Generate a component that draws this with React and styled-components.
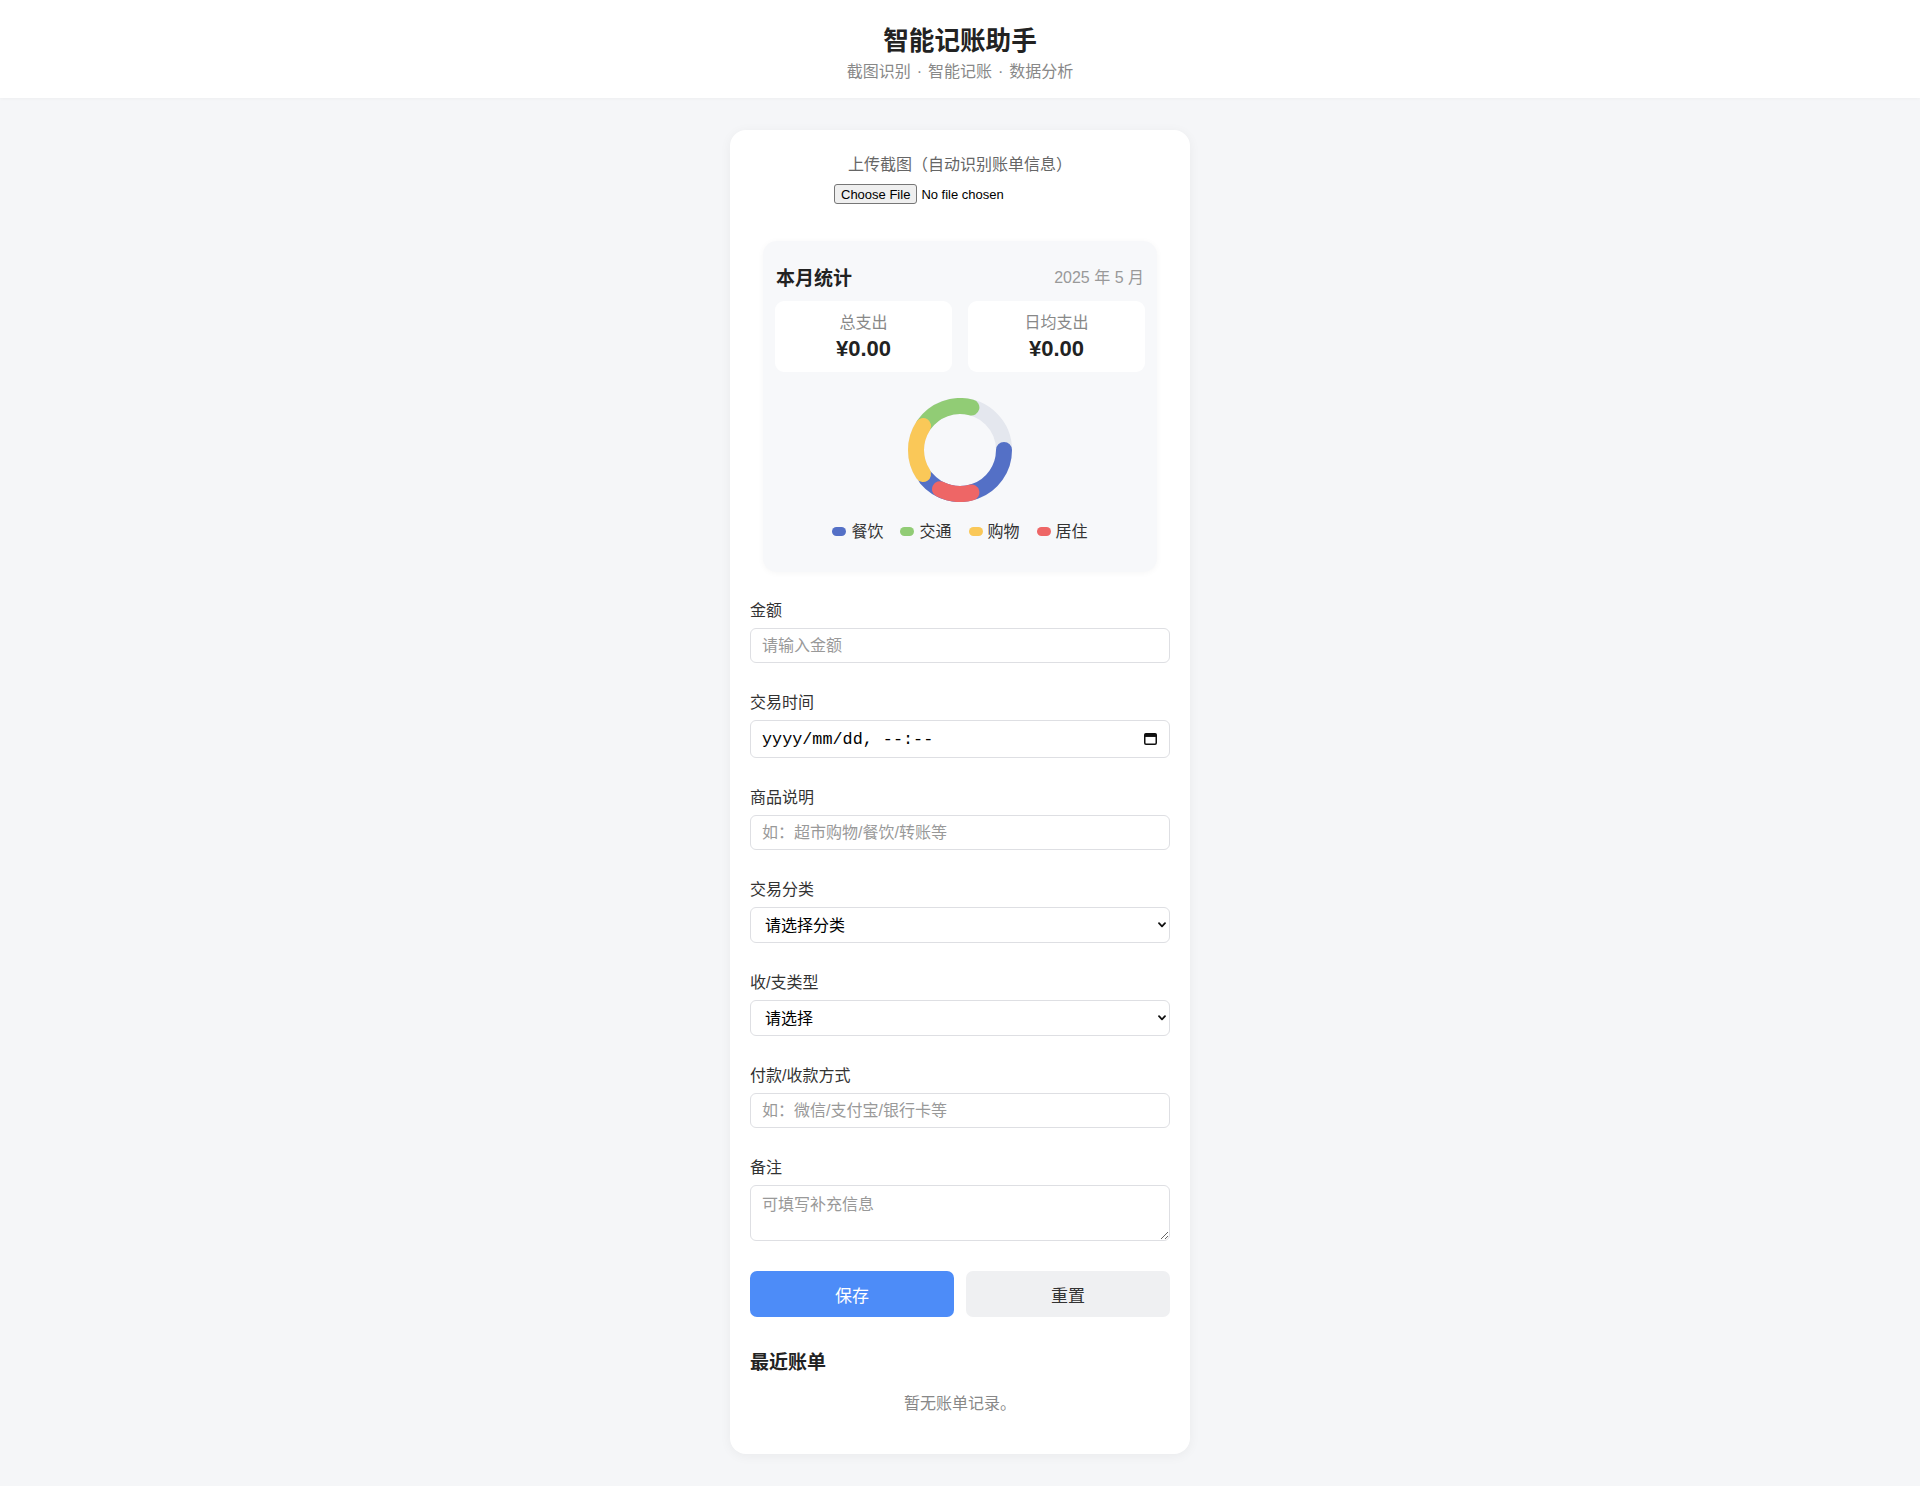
import React from 'react';
import styled, { createGlobalStyle } from 'styled-components';

const GlobalStyle = createGlobalStyle`
  body {
    margin: 0;
    background: #f5f6f8;
    font-family: "Liberation Sans", "Noto Sans CJK SC", sans-serif;
    color: #333;
  }
  * { box-sizing: border-box; }
`;

const Header = styled.header`
  background: #fff;
  padding: 24px 0 16px;
  text-align: center;
  box-shadow: 0 1px 3px rgba(0, 0, 0, 0.03);
`;

const Title = styled.h1`
  margin: 0;
  font-size: 25.6px;
  line-height: 34px;
  font-weight: 700;
  color: #222;
`;

const Subtitle = styled.div`
  margin-top: 3px;
  font-size: 16px;
  line-height: 21px;
  color: #888;
`;

const Sep = styled.span`
  margin: 0 6px;
`;

const Main = styled.main`
  padding: 32px 0 33px;
`;

const Card = styled.div`
  width: 460px;
  margin: 0 auto;
  background: #fff;
  border-radius: 16px;
  box-shadow: 0 2px 12px rgba(0, 0, 0, 0.05);
  padding: 24px 20px 40px;
`;

const Upload = styled.div`
  display: flex;
  flex-direction: column;
  align-items: center;
  margin-bottom: 37px;
`;

const UploadLabel = styled.div`
  font-size: 16px;
  line-height: 22px;
  color: #666;
  margin-bottom: 8px;
`;

const FileInput = styled.input`
  width: 252px;
  height: 20px;
  font: 13px "Liberation Sans", Arial, sans-serif;
  color: #000;

  &::file-selector-button {
    font: inherit;
    height: 20px;
    padding: 0 6px;
    margin-right: 4px;
    border: 1px solid #767676;
    border-radius: 3px;
    background: #efefef;
    color: #000;
  }
`;

const Stats = styled.section`
  margin: 0 13px 29px;
  background: #f7f8fa;
  border-radius: 14px;
  box-shadow: 0 1px 6px rgba(0, 0, 0, 0.04);
  padding: 22px 12px 30px;
`;

const StatsHead = styled.div`
  display: flex;
  justify-content: space-between;
  align-items: center;
  padding: 0 1px;
  margin-bottom: 12px;
  height: 26px;
`;

const StatsTitle = styled.h3`
  margin: 0;
  font-size: 19px;
  font-weight: 700;
  color: #222;
`;

const StatsMonth = styled.span`
  font-size: 16px;
  color: #999;
`;

const StatGrid = styled.div`
  display: grid;
  grid-template-columns: 1fr 1fr;
  gap: 16px;
`;

const StatCard = styled.div`
  background: #fff;
  border-radius: 9px;
  height: 71px;
  padding: 11px 0 0;
  display: flex;
  flex-direction: column;
  align-items: center;
`;

const StatLabel = styled.div`
  font-size: 16px;
  line-height: 22px;
  color: #888;
`;

const StatValue = styled.div`
  font-size: 22px;
  line-height: 29px;
  font-weight: 700;
  color: #222;
`;

const ChartWrap = styled.div`
  display: flex;
  justify-content: center;
  margin-top: 26px;
`;

const Legend = styled.div`
  display: flex;
  justify-content: center;
  gap: 17px;
  margin-top: 19px;
`;

const LegendItem = styled.div`
  display: flex;
  align-items: center;
  gap: 5px;
  font-size: 16px;
  line-height: 21px;
  color: #333;
`;

const LegendDot = styled.span`
  width: 14px;
  height: 9px;
  border-radius: 5px;
  background: ${p => p.color};
`;

const Field = styled.div`
  margin-bottom: 30px;
`;

const Label = styled.label`
  display: block;
  font-size: 16px;
  line-height: 20px;
  color: #333;
  margin-bottom: 7px;
`;

const TextInput = styled.input`
  display: block;
  width: 100%;
  height: 35px;
  padding: 0 11px;
  border: 1px solid #dedfe3;
  border-radius: 6px;
  font-family: inherit;
  font-size: 16px;
  color: #222;
  outline: none;

  &::placeholder {
    color: #999;
  }
`;

const Adorned = styled.div`
  position: relative;
`;

const DateInput = styled(TextInput)`
  height: 38px;
  font-family: "Liberation Mono", "DejaVu Sans Mono", monospace;
  font-size: 16.8px;

  &::placeholder {
    color: #000;
  }
`;

const CalendarIcon = styled.svg`
  position: absolute;
  right: 13px;
  top: 13px;
  pointer-events: none;
`;

const Select = styled.select`
  display: block;
  width: 100%;
  height: 36px;
  padding: 0 14px;
  border: 1px solid #dedfe3;
  border-radius: 6px;
  background: #fff;
  appearance: none;
  font-family: inherit;
  font-size: 16px;
  font-weight: 400;
  color: #000;
  outline: none;
`;

const Chevron = styled.svg`
  position: absolute;
  right: 4px;
  top: 15px;
  pointer-events: none;
`;

const TextArea = styled.textarea`
  display: block;
  width: 100%;
  height: 56px;
  padding: 9px 11px;
  border: 1px solid #dedfe3;
  border-radius: 6px;
  font-family: inherit;
  font-size: 16px;
  line-height: 20px;
  resize: vertical;
  outline: none;

  &::placeholder {
    color: #999;
  }
`;

const Actions = styled.div`
  display: grid;
  grid-template-columns: 1fr 1fr;
  gap: 12px;
  margin-top: 8px;
`;

const Button = styled.button`
  height: 46px;
  border: none;
  border-radius: 7px;
  font-family: inherit;
  font-size: 17px;
  background: ${p => (p.primary ? '#4d8cf8' : '#eff0f2')};
  color: ${p => (p.primary ? '#fff' : '#333')};
  cursor: pointer;
`;

const SectionTitle = styled.h3`
  margin: 33px 0 0;
  font-size: 19px;
  line-height: 25px;
  font-weight: 700;
  color: #222;
`;

const Empty = styled.div`
  margin-top: 18px;
  text-align: center;
  font-size: 16px;
  line-height: 21px;
  color: #888;
`;

const R = 44;
const C0 = 52;
const pt = a => [C0 + R * Math.cos((a * Math.PI) / 180), C0 + R * Math.sin((a * Math.PI) / 180)];
const arc = (a0, a1) => {
  const [x0, y0] = pt(a0);
  const [x1, y1] = pt(a1);
  return `M${x0} ${y0} A${R} ${R} 0 ${a1 - a0 > 180 ? 1 : 0} 1 ${x1} ${y1}`;
};

const segments = [
  { color: '#5470c6', from: 0, to: 140 },
  { color: '#91cc75', from: 215, to: 285 },
  { color: '#ee6666', from: 75, to: 117 },
  { color: '#fac858', from: 147, to: 213 },
];

const legend = [
  { name: '餐饮', color: '#5470c6' },
  { name: '交通', color: '#91cc75' },
  { name: '购物', color: '#fac858' },
  { name: '居住', color: '#ee6666' },
];

function Donut() {
  return (
    <svg width="104" height="104" viewBox="0 0 104 104">
      <circle cx={C0} cy={C0} r={R} fill="none" stroke="#e4e7ee" strokeWidth="16" />
      {segments.map(s => (
        <path key={s.color} d={arc(s.from, s.to)} fill="none" stroke={s.color} strokeWidth="16" strokeLinecap="round" />
      ))}
    </svg>
  );
}

function SelectBox({ text }) {
  return (
    <Adorned>
      <Select defaultValue="">
        <option value="">{text}</option>
      </Select>
      <Chevron width="8" height="6" viewBox="0 0 8 6">
        <polyline points="1,1.2 4,4.3 7,1.2" fill="none" stroke="#111" strokeWidth="1.8" strokeLinecap="round" strokeLinejoin="round" />
      </Chevron>
    </Adorned>
  );
}

export default function App() {
  return (
    <>
      <GlobalStyle />
      <Header>
        <Title>智能记账助手</Title>
        <Subtitle>
          截图识别<Sep>·</Sep>智能记账<Sep>·</Sep>数据分析
        </Subtitle>
      </Header>
      <Main>
        <Card>
          <Upload>
            <UploadLabel>上传截图（自动识别账单信息）</UploadLabel>
            <FileInput type="file" />
          </Upload>

          <Stats>
            <StatsHead>
              <StatsTitle>本月统计</StatsTitle>
              <StatsMonth>2025 年 5 月</StatsMonth>
            </StatsHead>
            <StatGrid>
              <StatCard>
                <StatLabel>总支出</StatLabel>
                <StatValue>¥0.00</StatValue>
              </StatCard>
              <StatCard>
                <StatLabel>日均支出</StatLabel>
                <StatValue>¥0.00</StatValue>
              </StatCard>
            </StatGrid>
            <ChartWrap>
              <Donut />
            </ChartWrap>
            <Legend>
              {legend.map(l => (
                <LegendItem key={l.name}>
                  <LegendDot color={l.color} />
                  {l.name}
                </LegendItem>
              ))}
            </Legend>
          </Stats>

          <Field>
            <Label>金额</Label>
            <TextInput placeholder="请输入金额" />
          </Field>
          <Field>
            <Label>交易时间</Label>
            <Adorned>
              <DateInput placeholder="yyyy/mm/dd, --:--" readOnly />
              <CalendarIcon width="13" height="12" viewBox="0 0 13 12">
                <rect x="0.75" y="0.75" width="11.5" height="10.5" rx="1.2" fill="none" stroke="#111" strokeWidth="1.5" />
                <rect x="0.75" y="0.75" width="11.5" height="3.2" fill="#111" />
              </CalendarIcon>
            </Adorned>
          </Field>
          <Field>
            <Label>商品说明</Label>
            <TextInput placeholder="如：超市购物/餐饮/转账等" />
          </Field>
          <Field>
            <Label>交易分类</Label>
            <SelectBox text="请选择分类" />
          </Field>
          <Field>
            <Label>收/支类型</Label>
            <SelectBox text="请选择" />
          </Field>
          <Field>
            <Label>付款/收款方式</Label>
            <TextInput placeholder="如：微信/支付宝/银行卡等" />
          </Field>
          <Field>
            <Label>备注</Label>
            <TextArea placeholder="可填写补充信息" />
          </Field>

          <Actions>
            <Button primary>保存</Button>
            <Button>重置</Button>
          </Actions>

          <SectionTitle>最近账单</SectionTitle>
          <Empty>暂无账单记录。</Empty>
        </Card>
      </Main>
    </>
  );
}
